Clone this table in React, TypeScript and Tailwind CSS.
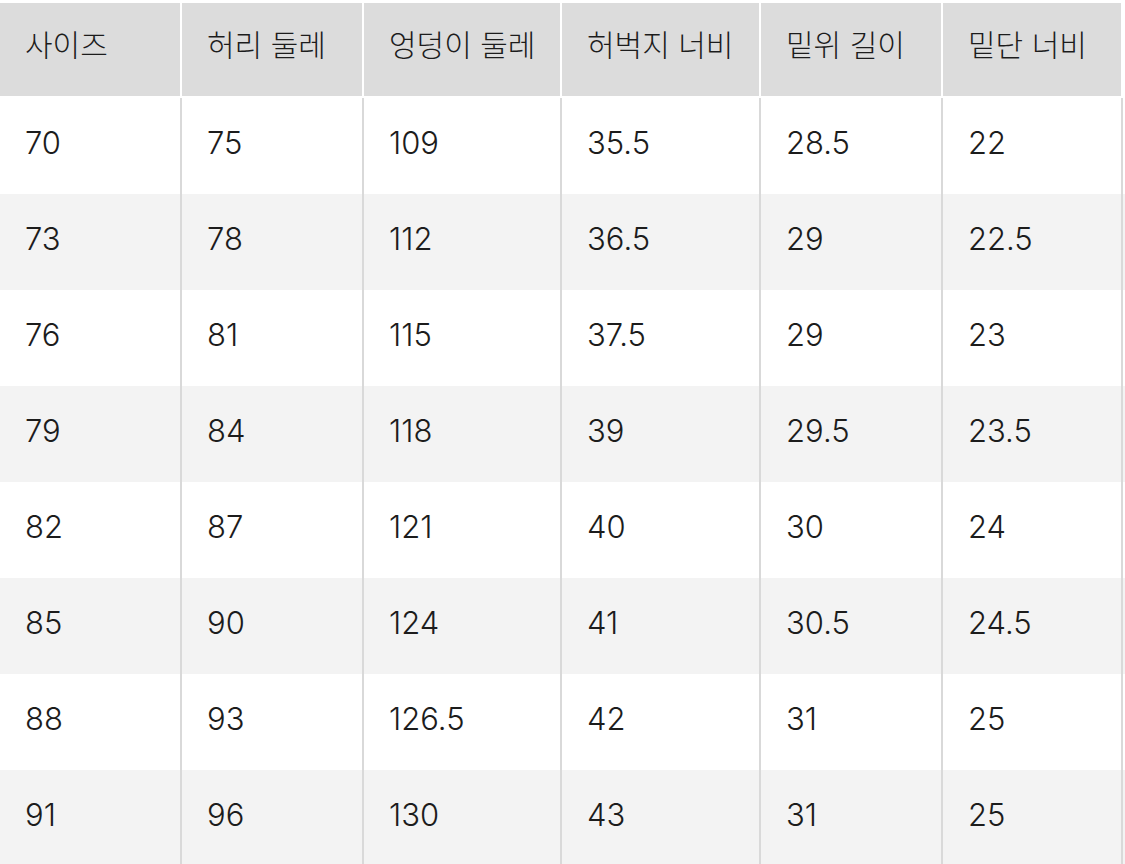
const headers = ["사이즈", "허리 둘레", "엉덩이 둘레", "허벅지 너비", "밑위 길이", "밑단 너비"];

const rows = [
  ["70", "75", "109", "35.5", "28.5", "22"],
  ["73", "78", "112", "36.5", "29", "22.5"],
  ["76", "81", "115", "37.5", "29", "23"],
  ["79", "84", "118", "39", "29.5", "23.5"],
  ["82", "87", "121", "40", "30", "24"],
  ["85", "90", "124", "41", "30.5", "24.5"],
  ["88", "93", "126.5", "42", "31", "25"],
  ["91", "96", "130", "43", "31", "25"],
];

// column widths, divider included
const widths = ["w-[182px]", "w-[182px]", "w-[198px]", "w-[199px]", "w-[182px]", "w-[180px]"];

export default function App() {
  return (
    <div
      className="w-[1125px] h-[864px] overflow-hidden bg-white text-[#1c1c1c]"
      style={{ fontFamily: 'Inter, "Noto Sans CJK KR", sans-serif' }}
    >
      {/* header */}
      <div className="flex pt-[3px] pb-[2px]">
        {headers.map((h, i) => (
          <div key={i} className={`${widths[i]} shrink-0 pr-[2px]`}>
            <div className="h-[93px] bg-[#dcdcdc] flex items-center pl-[25px] pb-[8px] text-[30px] font-light">
              {h}
            </div>
          </div>
        ))}
      </div>

      {/* body */}
      {rows.map((r, ri) => (
        <div key={ri} className={`flex h-[96px] ${ri % 2 === 1 ? "bg-[#f3f3f3]" : "bg-white"}`}>
          {r.map((v, ci) => (
            <div
              key={ci}
              className={`${widths[ci]} shrink-0 border-r-2 border-[#d9d9d9] flex items-center pl-[25px] pb-[6px] text-[31px] font-light`}
            >
              {v}
            </div>
          ))}
        </div>
      ))}
    </div>
  );
}
